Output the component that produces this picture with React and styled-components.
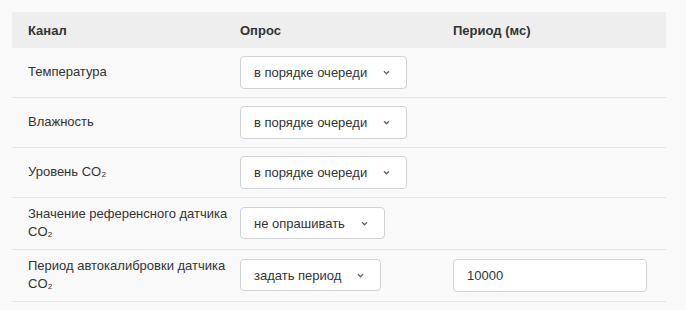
import styled, { createGlobalStyle } from "styled-components";

const GlobalStyle = createGlobalStyle`
  html, body {
    margin: 0;
    padding: 0;
    background: #f9f9f9;
  }
  body {
    font-family: "Liberation Sans", Arial, sans-serif;
    font-size: 13px;
    color: #333;
  }
`;

const Page = styled.div`
  padding: 12px 20px 0 12px;
`;

const Table = styled.div`
  display: flex;
  flex-direction: column;
`;

const Row = styled.div`
  display: grid;
  grid-template-columns: 200px 201px 1fr;
  column-gap: 12px;
  align-items: center;
  padding: ${(p) => (p.$head ? "0 16px" : "7px 16px 8px")};
  min-height: ${(p) => (p.$head ? "36px" : "34px")};
  background: ${(p) => (p.$head ? "#eeeeee" : "transparent")};
  border-bottom: ${(p) => (p.$head ? "none" : "1px solid #e6e6e6")};
  font-weight: ${(p) => (p.$head ? "bold" : "normal")};
`;

const Label = styled.div`
  line-height: 18px;
`;

const Select = styled.div`
  display: inline-flex;
  align-items: center;
  justify-self: start;
  box-sizing: border-box;
  height: ${(p) => p.$h || 33}px;
  padding: 0 16px 0 13px;
  background: #fff;
  border: 1px solid #cfd3d8;
  border-radius: 4px;
  gap: 16px;
  white-space: nowrap;
`;

const Chevron = () => (
  <svg width="7" height="5" viewBox="0 0 7 5">
    <path d="M1 1.2 L3.5 3.7 L6 1.2" fill="none" stroke="#666" strokeWidth="1.4" />
  </svg>
);

const Input = styled.div`
  box-sizing: border-box;
  width: 194px;
  height: 33px;
  padding: 0 13px;
  display: flex;
  align-items: center;
  background: #fff;
  border: 1px solid #cfd3d8;
  border-radius: 4px;
`;

const rows = [
  { label: "Температура", value: "в порядке очереди" },
  { label: "Влажность", value: "в порядке очереди" },
  { label: "Уровень CO₂", value: "в порядке очереди" },
  { label: "Значение референсного датчика CO₂", value: "не опрашивать", h: 32 },
  { label: "Период автокалибровки датчика CO₂", value: "задать период", h: 32, period: "10000" },
];

export default function App() {
  return (
    <Page>
      <GlobalStyle />
      <Table>
        <Row $head>
          <div>Канал</div>
          <div>Опрос</div>
          <div>Период (мс)</div>
        </Row>
        {rows.map((r) => (
          <Row key={r.label}>
            <Label>{r.label}</Label>
            <Select $h={r.h}>
              <span>{r.value}</span>
              <Chevron />
            </Select>
            <div>{r.period && <Input>{r.period}</Input>}</div>
          </Row>
        ))}
      </Table>
    </Page>
  );
}
